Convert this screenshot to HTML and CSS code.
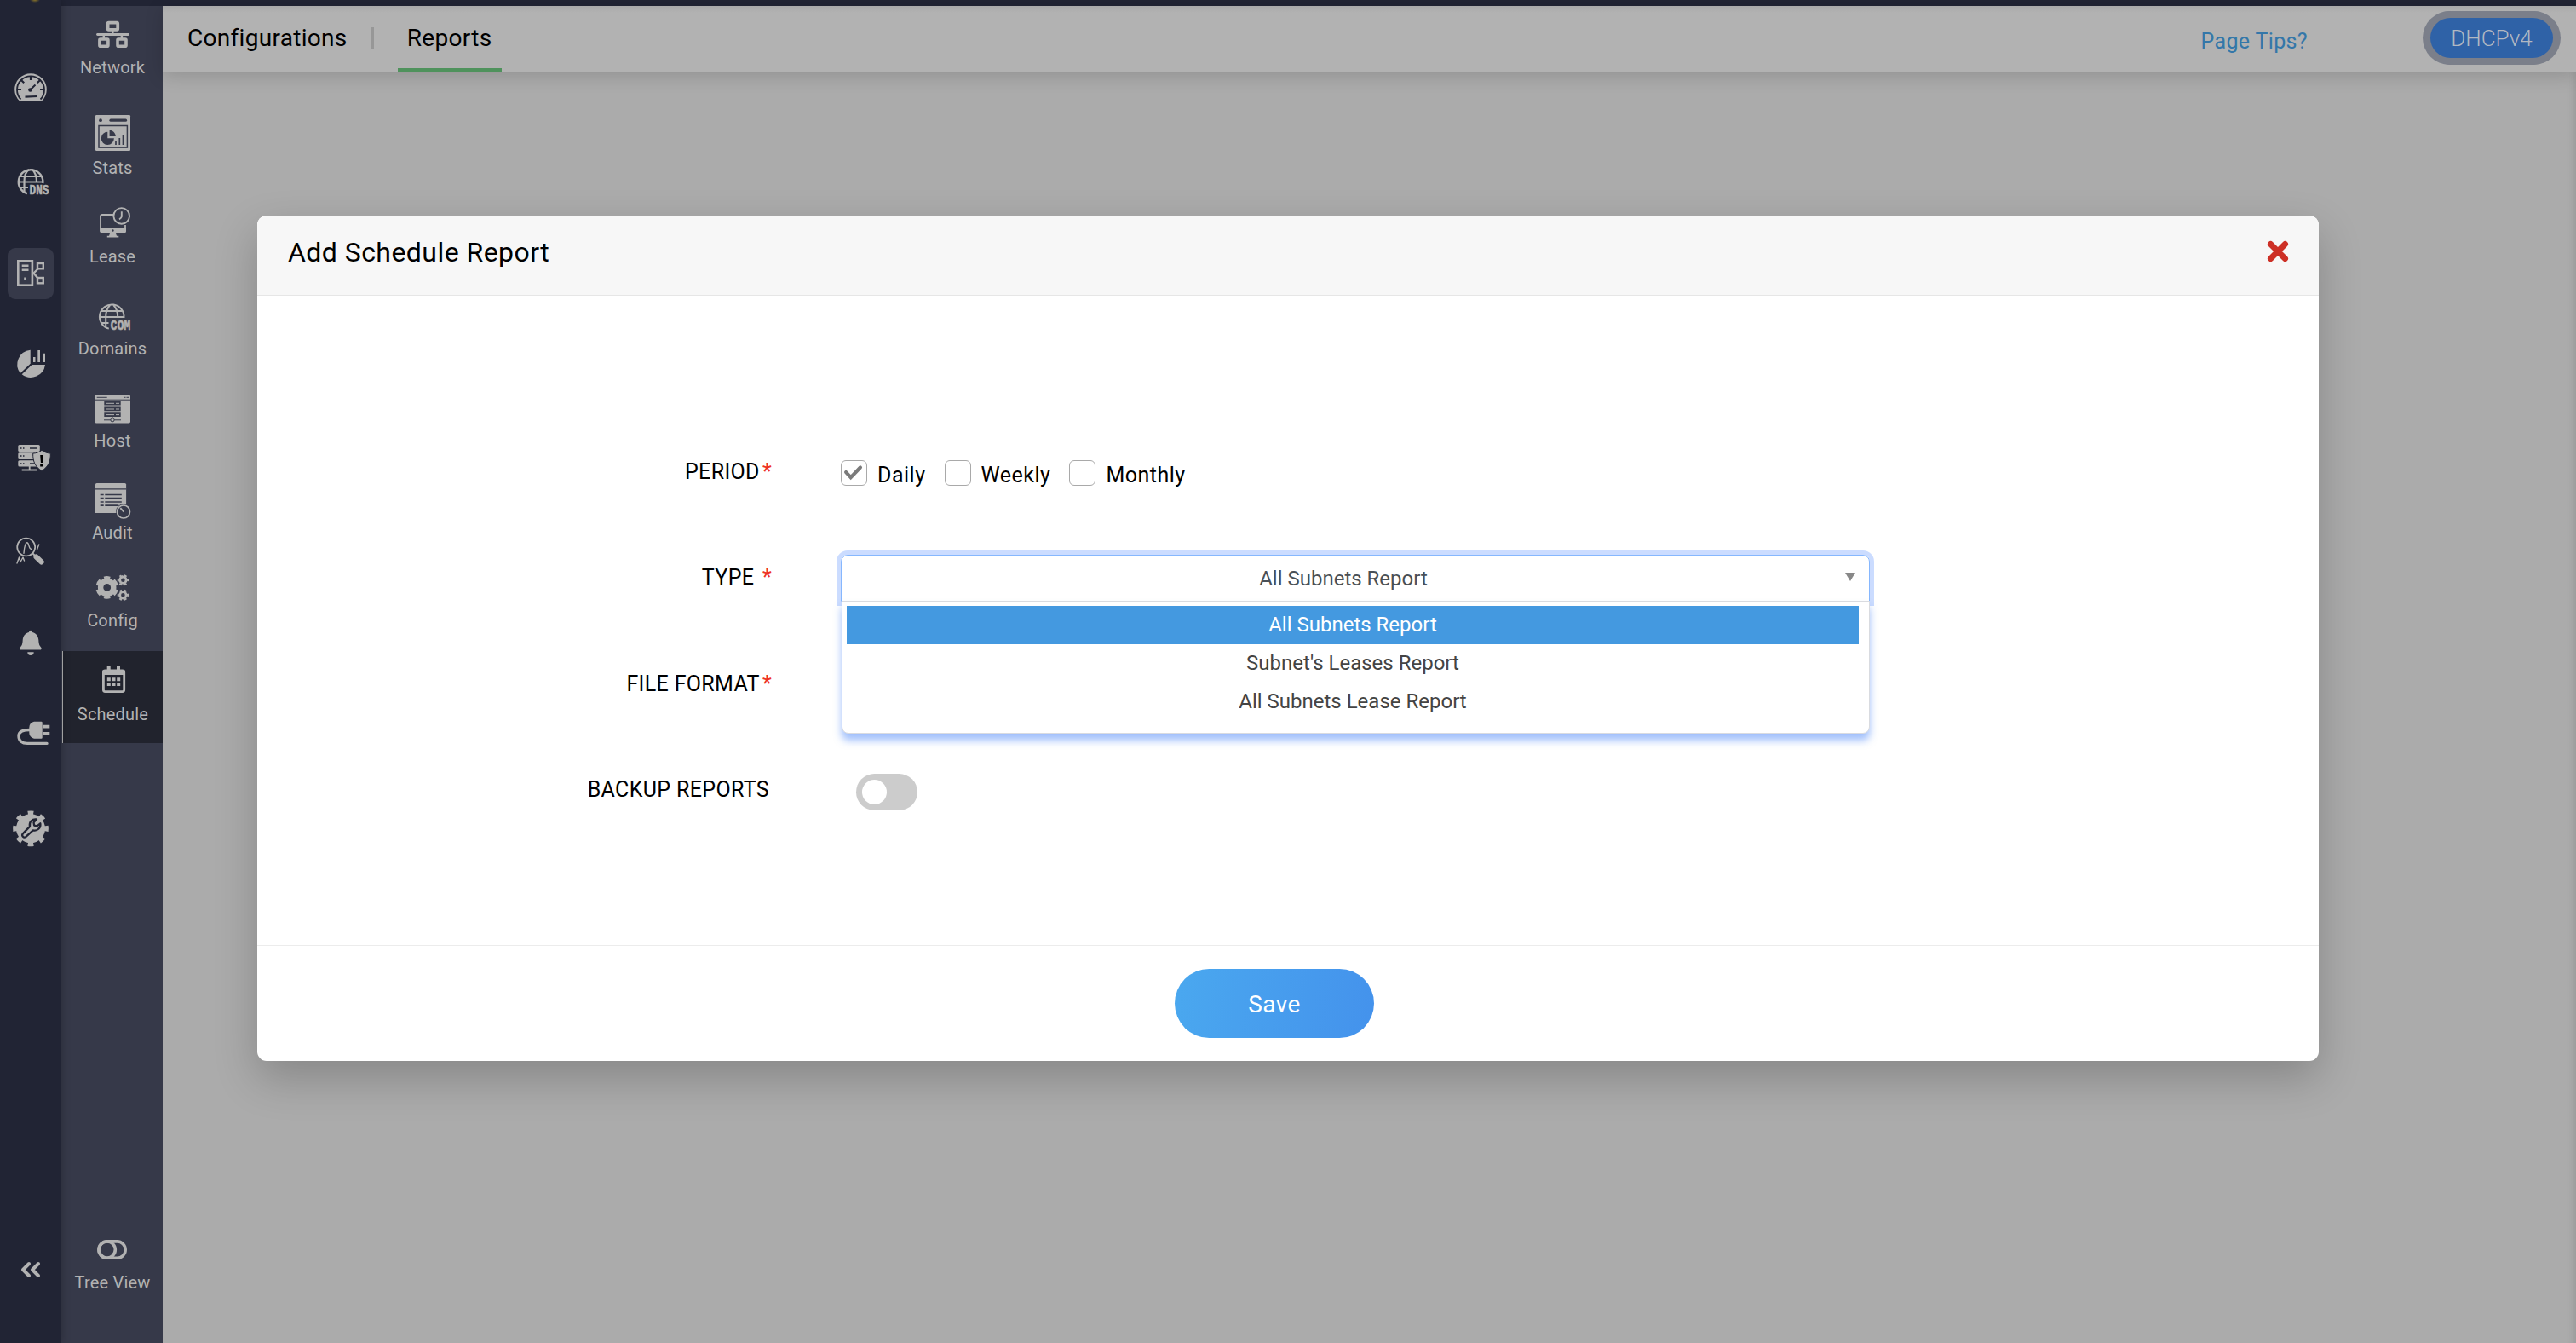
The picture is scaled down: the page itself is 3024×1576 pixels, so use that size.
FILE: index.html
```html
<!DOCTYPE html>
<html lang="en">
<head>
    <meta charset="UTF-8">
    <meta name="viewport" content="width=device-width, initial-scale=1.0">
    <title>Add Schedule Report</title>
    <link rel="stylesheet" href="styles.css">
</head>
<body>
    <div class="app">
        <!-- main icon rail -->
        <nav class="rail">
            <a class="rail-item">
                <svg viewBox="0 0 54 60">
                    <path class="fill" d="M14 45.6A18.8 18.8 0 1 1 40 45.6Z"/>
                    <path class="cut" stroke-width="1.8" d="M15.5 43.5A16 16 0 1 1 38.500 43.500"/>
                    <path class="cut" stroke-width="2.200" d="M27 16v5M15.700 20.700l3.500 3.500M38.300 20.700l-3.500 3.500M11 32h5M43 32h-5M20.500 40.600l14-.6"/>
                    <path class="cut" stroke-width="2" d="M27 32l5.500-5.500"/>
                    <circle class="hole" cx="26.500" cy="32.500" r="2.300"/>
                </svg>
            </a>
            <a class="rail-item">
                <svg viewBox="0 0 54 60">
                    <path class="line" stroke-width="2.400" d="M41.300 33A14.300 14.300 0 1 0 23 45.200"/>
                    <path class="line" stroke-width="2.200" d="M14 25h26M12.500 31.500h29M14 38h10M19.500 44V31C19.500 24 22 19 25 17M34 31c0-7-2-11-5-14"/>
                    <text class="tag" x="25.500" y="45.700" textLength="23" lengthAdjust="spacingAndGlyphs">DNS</text>
                </svg>
            </a>
            <a class="rail-item selected">
                <svg viewBox="0 0 54 60">
                    <rect class="line" stroke-width="2.600" x="12.300" y="15.300" width="16.600" height="28.400"/>
                    <path class="line" stroke-width="2.400" d="M16.700 20.700h7.800M16.700 25.700h7.800M30 30l6-6M30 29l6 7"/>
                    <rect class="fill" x="19.200" y="34.500" width="2.600" height="2.600"/>
                    <rect class="line" stroke-width="2.400" x="35" y="18" width="6.800" height="6.300"/>
                    <rect class="line" stroke-width="2.400" x="35" y="35" width="6.800" height="6.300"/>
                </svg>
            </a>
            <a class="rail-item">
                <svg viewBox="0 0 54 60">
                    <path class="fill" d="M26.700 10.700v16L14.800 37.900A17 17 0 0 1 26.700 10.700Z"/>
                    <path class="fill" d="M28.500 28h15.500A17 17 0 0 1 16.700 39.300Z"/>
                    <path class="fill" d="M30 19h2.500v6H30zM35.300 11H38v14h-2.700zM41 14.700h3V25h-3z"/>
                </svg>
            </a>
            <a class="rail-item">
                <svg viewBox="0 0 54 60">
                    <rect class="fill" x="12.300" y="13" width="25.500" height="8" rx="1.500"/>
                    <rect class="fill" x="12.300" y="22.200" width="25.500" height="7.800" rx="1.500"/>
                    <rect class="fill" x="12.300" y="31.200" width="25.500" height="7.400" rx="1.500"/>
                    <path class="cut" stroke-width="1.500" d="M15 17h1.500M18 17h1.500M26 17h9M15 26h1.500M18 26h1.500M15 35h1.500M18 35h1.500M26 35h6"/>
                    <path class="line" stroke-width="1.800" d="M16.700 42.500h18M25.700 38v4"/>
                    <path class="shield" d="M40 19.300c3 2.500 6.500 3.600 10.300 3.800.2 8.500-2 15.500-10.300 20.300-8.300-4.800-10.500-11.800-10.300-20.300 3.800-.2 7.300-1.300 10.300-3.800Z"/>
                    <path class="mark" d="M38.200 25h3.600l-.7 9h-2.200zM38.200 35.500h3.400v3h-3.400z"/>
                </svg>
            </a>
            <a class="rail-item">
                <svg viewBox="0 0 54 60">
                    <circle class="line" stroke-width="1.700" cx="21.700" cy="24" r="10.500"/>
                    <path class="line round" stroke-width="1.400" d="M19 31.300c.5-5 1-12.500 3.700-12.500S24.500 27 28 26.500M34.300 27.500l2.400-6.500M11 43l2.500-7 1.500 5.500 3-5.500 1.500 4"/>
                    <path class="line" stroke-width="2" d="M29 31l3 3"/>
                    <path class="line round" stroke-width="6" d="M33.500 35.500l6.200 6"/>
                </svg>
            </a>
            <a class="rail-item">
                <svg viewBox="0 0 54 60">
                    <path class="fill" d="M27 12.700c1.200 0 2 .9 2 2.400 4.600 1 7 4.600 7.300 9 .3 5 .9 6.500 2.900 8.600.9 1 .6 2.900-1 2.900H15.800c-1.600 0-1.900-1.900-1-2.900 2-2.100 2.600-3.600 2.900-8.600.3-4.400 2.700-8 7.300-9 0-1.500.8-2.400 2-2.400ZM23.300 38.200h7.400a3.700 3.700 0 0 1-7.400 0Z"/>
                </svg>
            </a>
            <a class="rail-item">
                <svg viewBox="0 0 54 60">
                    <path class="fill" d="M31 10.700h8.500q1.200 0 1.200 1.200v17.600q0 1.200-1.200 1.200H31q-5.700-1.500-5.700-7v-6q0-5.500 5.700-7Z"/>
                    <path class="line" stroke-width="3.800" d="M41.500 16.700h7.800M41.500 25h7.800"/>
                    <path class="line round" stroke-width="3.400" d="M26 20.500c-8 0-13 2-13 7 0 6 4 8.900 10 8.900h23"/>
                </svg>
            </a>
            <a class="rail-item">
                <svg viewBox="0 0 54 60">
                    <circle class="fill" cx="27" cy="27.300" r="17"/>
                    <circle class="line" stroke-width="5" cx="27" cy="27.300" r="18.400" pathLength="16" stroke-dasharray=".9 1.100" transform="rotate(-10.100 27 27.300)"/>
                    <path class="cut round" stroke-width="2.300" d="M38.300 21.300c1 5.200-3.500 9.400-8.500 8L21.500 36.800c-2.800 2.200-5.800-1-3.500-3.700l8-8.200c-1.200-5.500 3.200-9.300 8-8.400l-3.500 3.600.6 3.500 3.400.7Z"/>
                </svg>
            </a>
            <a class="rail-item collapse">
                <svg viewBox="0 0 54 60">
                    <path class="line round" stroke-width="4" d="M25 23l-7 7 7 7M36 23l-7 7 7 7"/>
                </svg>
            </a>
        </nav>

        <!-- DHCP sub menu -->
        <nav class="submenu">
            <a class="sub-item network">
                <svg viewBox="0 0 44 52">
                    <rect class="line" stroke-width="3.800" x="16.600" y="11.600" width="11.600" height="8.200" rx="1"/>
                    <path class="line round" stroke-width="2.800" d="M4.500 25.500h36"/>
                    <path class="line" stroke-width="2.500" d="M22.300 21v4M11.800 26v4M32.900 26v4"/>
                    <rect class="line" stroke-width="3.600" x="6.900" y="31" width="10" height="8.200" rx="1"/>
                    <rect class="line" stroke-width="3.600" x="28" y="31" width="10" height="8.200" rx="1"/>
                </svg>
                <span>Network</span>
            </a>
            <a class="sub-item stats">
                <svg viewBox="0 0 44 52">
                    <rect class="fill" x="2" y="2" width="41" height="42" rx="1.200"/>
                    <circle class="hole" cx="8" cy="8.200" r="1.900"/>
                    <path class="cut round" stroke-width="3.200" d="M20 8.200h17.500"/>
                    <rect class="cut" stroke-width="1.500" x="6" y="14.500" width="33.400" height="25.600"/>
                    <path class="hole" d="M16.300 21.700v7.600h7.600a7.600 7.600 0 1 1-7.600-7.600Z"/>
                    <path class="hole" d="M18.600 19.800a7.200 7.200 0 0 1 7.200 7.200h-7.200Z"/>
                    <path class="cut" stroke-width="1.700" d="M26 37v-5M30.300 37v-8M34.500 37V25"/>
                </svg>
                <span>Stats</span>
            </a>
            <a class="sub-item lease">
                <svg viewBox="0 0 44 52">
                    <path class="line" stroke-width="1.800" d="M24 15H10q-2 0-2 2v16.500q0 2 2 2h25q2 0 2-2V27"/>
                    <path class="fill" d="M7.500 31H38v3q0 2.300-2.300 2.300h-26Q7.500 36.300 7.500 34ZM19 37h7l1 2.800h2.300v1.800H15.800v-1.800H18Z"/>
                    <circle class="hole" cx="22.400" cy="33.500" r="1.300"/>
                    <circle class="line" stroke-width="1.900" cx="32.700" cy="16.400" r="9.300"/>
                    <path class="line" stroke-width="1.900" d="M32.800 11.300v5.500q0 2-2.800 3.500"/>
                </svg>
                <span>Lease</span>
            </a>
            <a class="sub-item">
                <svg viewBox="0 0 44 52">
                    <path class="line" stroke-width="2" d="M35.500 28A14.300 14.300 0 1 0 17.800 40.600"/>
                    <path class="line" stroke-width="2" d="M8.500 20h25M6.800 27h29M8.500 34h9M14.200 38.500V27c0-6 2-11 5-14M28.200 27c0-6-2-11-5-14"/>
                    <text class="tag" x="19.800" y="41.700" textLength="23.500" lengthAdjust="spacingAndGlyphs">COM</text>
                </svg>
                <span>Domains</span>
            </a>
            <a class="sub-item">
                <svg viewBox="0 0 44 52">
                    <rect class="fill" x="1.200" y="10.300" width="41.800" height="33.300" rx="1.800"/>
                    <path class="cut" stroke-width="1" d="M1.200 16.200H43M3.700 13.300h12M35 13.300h2.500M38.500 13.300H41"/>
                    <path class="hole" d="M12.300 17.900h19.400v4.700H12.300zM12.300 24.600h19.400v4.700H12.300zM12.300 31.200h19.400v4.700H12.300z"/>
                    <path class="line" stroke-width="1" d="M14 20.300h10M26 20.300h4M14 27h10M26 27h4M14 33.600h10M26 33.600h4"/>
                    <path class="cut" stroke-width="1" d="M12 39.800h8M24 39.800h8M22 36v2"/>
                    <circle class="cut" stroke-width="1" cx="22" cy="39.800" r="2.100"/>
                </svg>
                <span>Host</span>
            </a>
            <a class="sub-item">
                <svg viewBox="0 0 44 52">
                    <path class="fill" d="M3.500 6H36.500q1.600 0 1.600 1.600V41H2V7.600Q2 6 3.500 6Z"/>
                    <path class="cut" stroke-width="1.200" d="M2 12.800h36"/>
                    <path class="cut" stroke-width="1.700" d="M7.700 19.500h4M13.300 19.500h19.500M7.700 23.700h4M13.300 23.700h19.500M7.700 28h4M13.300 28h19.500M7.700 32.200h4M13.300 32.200h16"/>
                    <circle class="hole" cx="35" cy="39.300" r="9"/>
                    <circle class="line" stroke-width="1.700" cx="35" cy="39.500" r="7.500"/>
                    <path class="line" stroke-width="1.900" d="M35.300 39.700l-4-4.500"/>
                </svg>
                <span>Audit</span>
            </a>
            <a class="sub-item config">
                <svg viewBox="0 0 44 52">
                    <circle class="line" stroke-width="6.400" cx="15.700" cy="25.400" r="7.600"/>
                    <circle class="line" stroke-width="3.600" cx="15.700" cy="25.400" r="11.500" pathLength="12" stroke-dasharray="1.200 .8" transform="rotate(12 15.700 25.400)"/>
                    <circle class="line" stroke-width="2.800" cx="34.400" cy="16.700" r="3.700"/>
                    <circle class="line" stroke-width="2" cx="34.400" cy="16.700" r="5.700" pathLength="12" stroke-dasharray="1 1" transform="rotate(-15 34.400 16.700)"/>
                    <circle class="line" stroke-width="2.800" cx="34.400" cy="34.300" r="3.700"/>
                    <circle class="line" stroke-width="2" cx="34.400" cy="34.300" r="5.700" pathLength="12" stroke-dasharray="1 1" transform="rotate(-15 34.400 34.300)"/>
                </svg>
                <span>Config</span>
            </a>
            <a class="sub-item active">
                <svg viewBox="0 0 44 52">
                    <rect class="line" stroke-width="2.800" x="10.400" y="13" width="24.300" height="24.600" rx="2"/>
                    <path class="fill" d="M9.500 12.500h26V18h-26zM14.700 8h4v5h-4zM26 8h4v5h-4z"/>
                    <path class="line" stroke-width="4" stroke-dasharray="4 1.700" d="M14.800 23.300h15.400M14.800 29h15.400"/>
                </svg>
                <span>Schedule</span>
            </a>
            <a class="sub-item tree">
                <svg viewBox="0 0 44 52">
                    <rect class="line" stroke-width="3.600" x="5.900" y="15.900" width="31.300" height="19.400" rx="9.700"/>
                    <circle class="line" stroke-width="3.600" cx="15.700" cy="25.600" r="9.600"/>
                </svg>
                <span>Tree View</span>
            </a>
        </nav>

        <main class="page">
            <header class="topbar">
                <a class="tab">Configurations</a>
                <span class="divider"></span>
                <a class="tab current">Reports</a>
                <a class="tips">Page Tips?</a>
                <button class="version">DHCPv4</button>
            </header>
        </main>
    </div>

    <!-- schedule report dialog -->
    <div class="overlay">
        <div class="modal">
            <div class="modal-header">
                <h2>Add Schedule Report</h2>
                <svg class="close" viewBox="0 0 24 24"><path d="M3.500 3.500l17 17M20.500 3.500l-17 17"/></svg>
            </div>
            <form class="modal-body">
                <label class="name">PERIOD<em>*</em></label>
                <div class="periods">
                    <label class="check">
                        <span class="box"><svg viewBox="0 0 30 30"><path d="M5.500 14l6 6.500L23.500 8"/></svg></span>Daily
                    </label>
                    <label class="check"><span class="box"></span>Weekly</label>
                    <label class="check"><span class="box"></span>Monthly</label>
                </div>

                <label class="name">TYPE <em>*</em></label>
                <div class="select">
                    <span class="value">All Subnets Report</span>
                    <span class="arrow"></span>
                    <ul class="dropdown">
                        <li class="highlighted">All Subnets Report</li>
                        <li>Subnet's Leases Report</li>
                        <li>All Subnets Lease Report</li>
                    </ul>
                </div>

                <label class="name">FILE FORMAT<em>*</em></label>
                <div></div>

                <label class="name optional">BACKUP REPORTS</label>
                <div class="toggle"><span class="knob"></span></div>
            </form>
            <div class="modal-footer">
                <button type="button" class="save">Save</button>
            </div>
        </div>
    </div>
</body>
</html>
```
FILE: styles.css
```css
* {
    margin: 0;
    padding: 0;
    box-sizing: border-box;
}
body {
    font-family: Roboto, sans-serif;
    background: #ababab;
    color: black;
    width: 3024px;
    height: 1576px;
    overflow: hidden;
}
.app {
    display: flex;
    height: 1576px;
    border-top: 7px solid #212434;
}

/* icons */
svg {
    display: block;
    overflow: visible;
    --bg: #363949;
}
.fill {
    fill: #b2b2b2;
}
.line {
    fill: none;
    stroke: #b2b2b2;
}
.cut {
    fill: none;
    stroke: var(--bg);
}
.hole {
    fill: var(--bg);
}
.round {
    stroke-linecap: round;
    stroke-linejoin: round;
}
.tag {
    font-family: "Liberation Mono", monospace;
    font-size: 16px;
    font-weight: bold;
    fill: #b2b2b2;
    stroke: #b2b2b2;
    stroke-width: 0.6;
}
.shield {
    fill: #b2b2b2;
    stroke: #212434;
    stroke-width: 1;
}
.mark {
    fill: black;
}

.rail {
    display: flex;
    flex-direction: column;
    align-items: center;
    gap: 49px;
    width: 72px;
    margin-top: -7px;
    padding: 73px 0 56px;
    background: radial-gradient(ellipse 6px 3px at 41px 0, #8a7528, transparent) #212434;
    box-shadow: 0 0 10px rgba(0, 0, 0, 0.25);
    z-index: 1;
}
.rail-item {
    width: 54px;
    height: 60px;
    border-radius: 9px;
}
.rail-item svg {
    width: 54px;
    height: 60px;
    --bg: #212434;
}
.rail-item.selected {
    background: #363949;
}
.collapse {
    margin-top: auto;
}

.submenu {
    display: flex;
    flex-direction: column;
    width: 119px;
    padding-bottom: 59px;
    background: #363949;
}
.sub-item {
    display: flex;
    flex-direction: column;
    align-items: center;
    margin-top: 32px;
    padding-left: 1px;
    font-size: 20px;
    line-height: 24px;
    letter-spacing: 0.2px;
    color: #b2b2b2;
}
.sub-item svg {
    width: 44px;
    height: 52px;
}
.sub-item.network {
    margin-top: 8px;
}
.sub-item.stats {
    margin-top: 42px;
}
.sub-item.lease {
    margin-top: 28px;
}
.sub-item.config {
    margin-top: 27px;
}
.sub-item.active {
    margin: 24px 0 0 1px;
    padding: 10px 0 22px;
    border-left: 1px solid #b2b2b2;
    background: #21232d;
}
.sub-item.tree {
    margin-top: auto;
}

.page {
    flex: 1;
    box-shadow: inset -10px 0 8px -8px rgba(0, 0, 0, 0.12);
}
.topbar {
    display: flex;
    height: 78px;
    padding: 0 27px 0 29px;
    background: linear-gradient(#a9a9a9, #b2b2b2 8px);
    box-shadow: 0 4px 20px rgba(0, 0, 0, 0.15);
}
.tab {
    height: 78px;
    font-size: 28px;
    line-height: 75px;
    letter-spacing: 0.3px;
}
.tab.current {
    width: 122px;
    border-bottom: 5px solid #4f925c;
    text-align: center;
}
.divider {
    width: 4px;
    height: 26px;
    margin: 25px 28px 0 27px;
    background: #979797;
}
.tips {
    margin-left: auto;
    font-size: 25px;
    line-height: 83px;
    letter-spacing: 0.35px;
    color: #3477a9;
}
.version {
    width: 144px;
    height: 47px;
    margin: 14px 0 0 144px;
    border: none;
    border-radius: 24px;
    background: #2f62a7;
    box-shadow: 1px 0 0 8px #7b7f8a, -1px 0 0 8px #7b7f8a;
    font-family: Roboto, sans-serif;
    font-size: 26px;
    font-weight: 300;
    line-height: 46px;
    color: #b2b8c2;
}

.overlay {
    position: absolute;
    top: 0;
    left: 0;
    width: 3024px;
    height: 1576px;
    padding: 253px 302px 0;
    z-index: 2;
}
.modal {
    display: flex;
    flex-direction: column;
    height: 992px;
    border-radius: 11px;
    background: white;
    box-shadow: 0 20px 50px rgba(0, 0, 0, 0.21);
}
.modal-header {
    display: flex;
    justify-content: space-between;
    height: 94px;
    padding: 0 36px;
    border-bottom: 1px solid #e6e6e6;
    border-radius: 11px 11px 0 0;
    background: #f7f7f7;
}
.modal-header h2 {
    font-size: 32px;
    font-weight: 400;
    line-height: 87px;
    letter-spacing: 0.45px;
}
.close {
    width: 24px;
    height: 24px;
    margin-top: 30px;
    fill: none;
    stroke: #cd3026;
    stroke-width: 7;
    stroke-linecap: round;
}
.modal-body {
    flex: 1;
    display: grid;
    grid-template-columns: 604px 1208px;
    grid-auto-rows: 124.4px;
    column-gap: 81px;
    align-content: start;
    align-items: start;
    padding-top: 191px;
    font-size: 25px;
    line-height: 32px;
}
.name {
    text-align: right;
    letter-spacing: 0.35px;
    white-space: pre;
}
.name em {
    margin-left: 3px;
    font-style: normal;
    color: #ee3124;
}
.name.optional {
    padding-right: 3px;
}
.periods {
    display: flex;
    gap: 22px;
    padding-top: 2px;
}
.check {
    display: flex;
    gap: 12px;
    line-height: 36px;
    letter-spacing: 0.5px;
}
.box {
    width: 31px;
    height: 30px;
    border: 1px solid #a9a9a9;
    border-radius: 6px;
}
.box svg {
    width: 28px;
    height: 28px;
    fill: none;
    stroke: #7b7b7b;
    stroke-width: 4.5;
    stroke-linecap: round;
}
.select {
    position: relative;
    display: flex;
    align-items: center;
    height: 55px;
    margin-top: -11px;
    padding: 0 16px 0 20px;
    border: 1px solid #86b7fe;
    border-radius: 8px 8px 0 0;
    box-shadow: 0 0 0 5px #cbdcff;
    font-size: 24px;
    color: #495057;
}
.value {
    flex: 1;
    padding: 1px 20px 0 0;
    text-align: center;
}
.arrow {
    margin-top: -3px;
    border: 6px solid transparent;
    border-top: 10px solid #888;
    border-bottom: none;
}
.dropdown {
    position: absolute;
    top: 53px;
    left: 0;
    width: 1207px;
    height: 156px;
    padding: 5px 12px 0 5px;
    border: 1px solid #d9dbe0;
    border-radius: 0 0 8px 8px;
    background: white;
    box-shadow: 0 8px 10px rgba(68, 130, 250, 0.5);
    list-style: none;
    text-align: center;
    line-height: 45px;
    color: #444;
}
.dropdown li {
    height: 45px;
}
.highlighted {
    background: #4499e0;
    color: white;
}
.toggle {
    width: 72px;
    height: 43px;
    margin: -3px 0 0 18px;
    padding: 7px;
    border-radius: 22px;
    background: #ccc;
}
.knob {
    display: block;
    width: 29px;
    height: 29px;
    border-radius: 50%;
    background: white;
}
.modal-footer {
    height: 136px;
    padding: 27px 0 0 1077px;
    border-top: 1px solid #ececec;
}
.save {
    width: 234px;
    height: 81px;
    border: none;
    border-radius: 41px;
    background: linear-gradient(100deg, #4aa8ef, #4492ec);
    font-family: Roboto, sans-serif;
    font-size: 28px;
    line-height: 83px;
    letter-spacing: 0.4px;
    color: white;
}
```
